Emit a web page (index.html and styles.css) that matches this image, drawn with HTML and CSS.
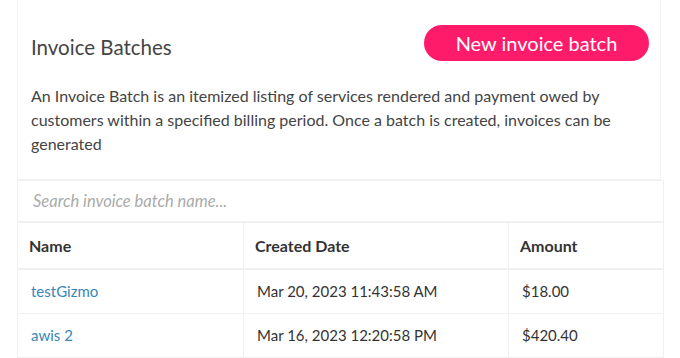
FILE: index.html
```html
<!DOCTYPE html>
<html lang="en">
<head>
    <meta charset="UTF-8">
    <meta name="viewport" content="width=device-width, initial-scale=1.0">
    <title>Invoice Batches</title>
    <link rel="stylesheet" href="styles.css">
</head>
<body>
    <div class="page">
        <div class="intro-card">
            <div class="intro-header">
                <h1 class="title">Invoice Batches</h1>
                <button class="new-button">New invoice batch</button>
            </div>
            <p class="description">An Invoice Batch is an itemized listing of services rendered and payment owed by customers within a specified billing period. Once a batch is created, invoices can be generated</p>
        </div>

        <div class="table-card">
            <div class="search-row">
                <input type="text" class="search-input" placeholder="Search invoice batch name...">
            </div>
            <table class="batch-table">
                <thead>
                    <tr>
                        <th class="col-name">Name</th>
                        <th class="col-date">Created Date</th>
                        <th class="col-amount">Amount</th>
                    </tr>
                </thead>
                <tbody>
                    <tr>
                        <td><a href="#">testGizmo</a></td>
                        <td>Mar 20, 2023 11:43:58 AM</td>
                        <td>$18.00</td>
                    </tr>
                    <tr>
                        <td><a href="#">awis 2</a></td>
                        <td>Mar 16, 2023 12:20:58 PM</td>
                        <td>$420.40</td>
                    </tr>
                </tbody>
            </table>
        </div>
    </div>
</body>
</html>
```

FILE: styles.css
```css
body {
    font-family: Lato, "Open Sans", sans-serif;
    background-color: white;
    color: #444;
    margin: 0;
}
.page {
    padding-left: 17px;
    width: 646px;
}
.intro-card {
    border: 1px solid #f3f3f3;
    border-top: none;
    padding: 25px 11px 23px 13px;
    width: 618px;
}
.intro-header {
    display: flex;
    justify-content: space-between;
    align-items: flex-start;
    margin-bottom: 23px;
}
.title {
    font-size: 20.5px;
    line-height: 24px;
    font-weight: normal;
    margin: 10px 0 0 0;
    color: #444;
}
.new-button {
    background-color: #fe1b6a;
    color: white;
    border: none;
    border-radius: 18px;
    height: 36px;
    width: 225px;
    font-family: inherit;
    font-size: 20px;
    cursor: pointer;
}
.description {
    font-size: 16px;
    line-height: 24px;
    margin: 0;
}
.table-card {
    border: 1px solid #f0f0f0;
    width: 645px;
}
.search-row {
    border-bottom: 2px solid #f0f0f0;
}
.search-input {
    width: 100%;
    box-sizing: border-box;
    height: 40px;
    border: none;
    padding: 0 15px;
    font-family: inherit;
    font-size: 16.5px;
    font-style: italic;
    outline: none;
}
.search-input::placeholder {
    color: #aaa;
}
.batch-table {
    width: 100%;
    border-collapse: collapse;
    font-size: 15px;
}
.batch-table th {
    text-align: left;
    font-size: 16px;
    font-weight: bold;
    color: #333;
    height: 45px;
    padding: 0 11px;
    border-bottom: 2px solid #f0f0f0;
}
.batch-table td {
    height: 41px;
    padding: 0 13px 2px;
    color: #333;
}
.batch-table tbody tr + tr td {
    border-top: 1px solid #f0f0f0;
}
.batch-table th + th,
.batch-table td + td {
    border-left: 1px solid #f0f0f0;
}
.batch-table a {
    color: #3a86b9;
    text-decoration: none;
}
.col-name {
    width: 203px;
}
.col-date {
    width: 242px;
}
```
